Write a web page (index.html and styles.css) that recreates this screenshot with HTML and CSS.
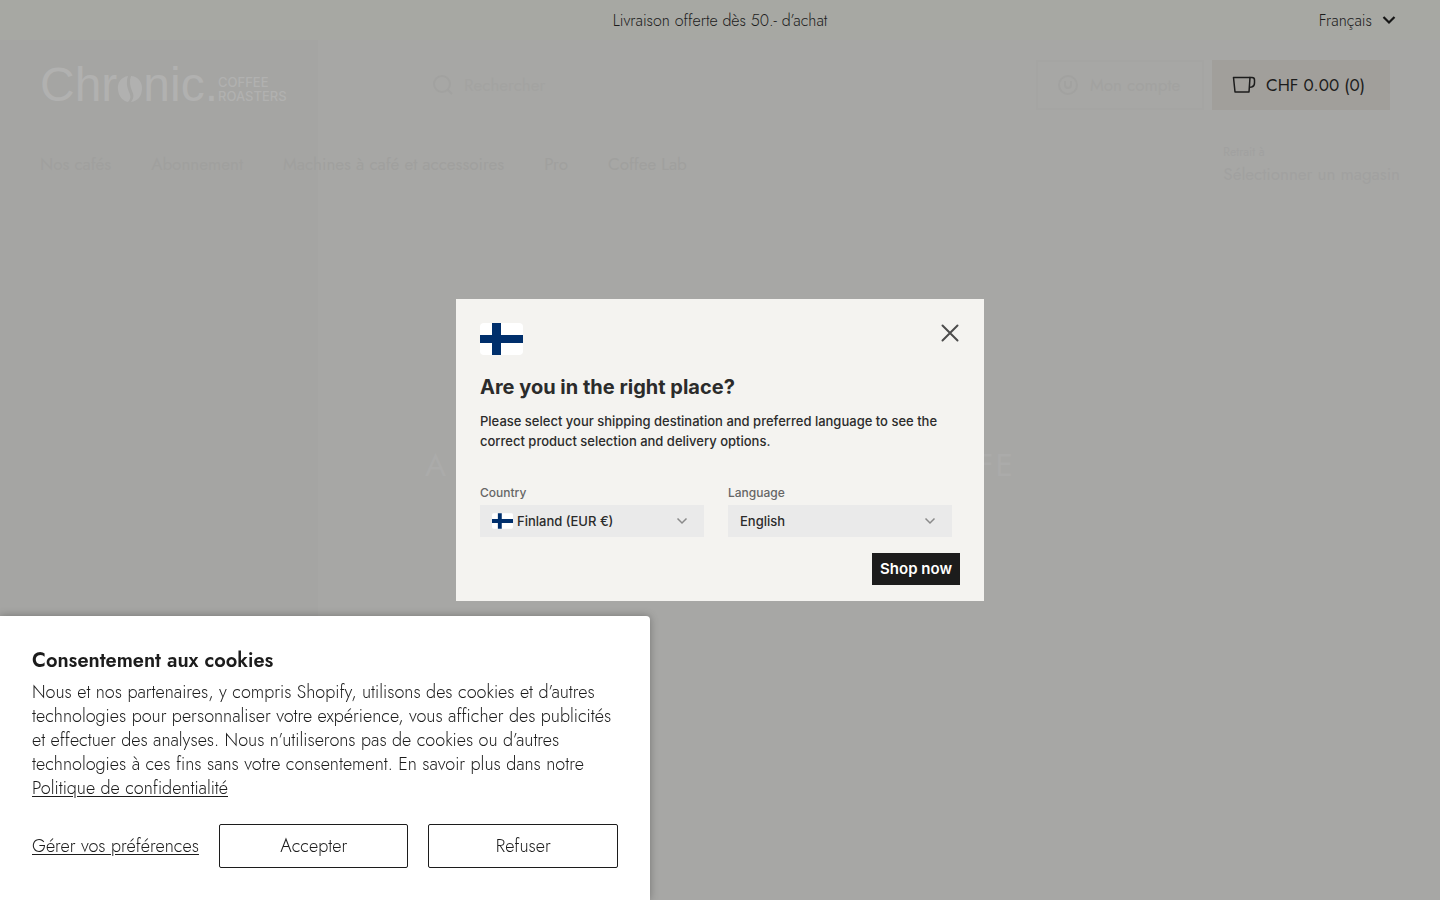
FILE: index.html
```html
<!DOCTYPE html>
<html lang="fr">
<head>
    <meta charset="UTF-8">
    <meta name="viewport" content="width=device-width, initial-scale=1.0">
    <title>Chronic. Coffee Roasters</title>
    <link rel="stylesheet" href="styles.css">
</head>
<body>
    <div class="topbar">
        <span class="topbar-message">Livraison offerte dès 50.- d’achat</span>
        <button class="lang-button" type="button">
            Français
            <svg width="14" height="10" viewBox="0 0 14 10"><path d="M1.500 2L7 7.500 12.500 2" fill="none" stroke="#161616" stroke-width="2.200"/></svg>
        </button>
    </div>

    <div class="page">
        <header class="header">
            <a class="logo" href="#" aria-label="Chronic. Coffee Roasters">
                <span class="logo-name">Chr</span>
                <svg class="bean" width="26" height="28" viewBox="0 0 26 28">
                    <path d="M11 1C4 2 0 8 1 15c1 7 5 11 10 12 3-3 3-6 1-10-2-5-3-10-1-16z"/>
                    <path d="M14 1c6 0 11 5 11 12 0 8-4 13-11 14 3-4 3-7 1-11-2-5-3-10-1-15z"/>
                </svg>
                <span class="logo-name">nic.</span>
                <span class="logo-sub">COFFEE<br>ROASTERS</span>
            </a>
            <form class="search">
                <svg width="22" height="22" viewBox="0 0 22 22" fill="none" stroke="currentColor" stroke-width="2"><circle cx="10" cy="10" r="8"/><path d="M16 16l4 4"/></svg>
                <input type="search" placeholder="Rechercher" aria-label="Rechercher">
            </form>
            <a class="account" href="#">
                <svg width="20" height="20" viewBox="0 0 20 20" fill="none" stroke="currentColor" stroke-width="2"><circle cx="10" cy="10" r="9"/><path d="M7 6v4a3 3 0 0 0 6 0V6"/></svg>
                Mon compte
            </a>
            <a class="cart" href="#">
                <svg width="24" height="18" viewBox="0 0 24 18" fill="none" stroke="#1c1c1c" stroke-width="1.500" stroke-linejoin="round"><path d="M1.500 1.500h16.500l-1 14.500H3z"/><path d="M17.500 1.500h2.500q2.500 0 2.500 2.500v3q0 3.500-3 4l-2.300.3"/></svg>
                CHF 0.00 (0)
            </a>
        </header>
        <div class="subheader">
            <nav class="nav">
                <a href="#">Nos cafés</a>
                <a href="#">Abonnement</a>
                <a href="#">Machines à café et accessoires</a>
                <a href="#">Pro</a>
                <a href="#">Coffee Lab</a>
            </nav>
            <a class="store" href="#"><small>Retrait à</small>Sélectionner un magasin</a>
        </div>
        <h1 class="hero-title"><span>A</span><span>FE</span></h1>
    </div>

    <section class="cookies" aria-labelledby="cookiesTitle">
        <h2 id="cookiesTitle">Consentement aux cookies</h2>
        <p>Nous et nos partenaires, y compris Shopify, utilisons des cookies et d’autres technologies pour personnaliser votre expérience, vous afficher des publicités et effectuer des analyses. Nous n’utiliserons pas de cookies ou d’autres technologies à ces fins sans votre consentement. En savoir plus dans notre <a href="#">Politique de confidentialité</a></p>
        <div class="cookies-actions">
            <button class="link-button" type="button">Gérer vos préférences</button>
            <button class="box-button" type="button">Accepter</button>
            <button class="box-button" type="button">Refuser</button>
        </div>
    </section>

    <div class="modal-wrap">
        <div class="modal" role="dialog" aria-labelledby="modalTitle" lang="en">
            <div class="modal-top">
                <svg class="flag" width="43" height="32" viewBox="0 0 43 32"><rect width="43" height="32" fill="#fff"/><path d="M12 0h9v32h-9zM0 12h43v8H0z" fill="#002f6c"/></svg>
                <button class="close" type="button" aria-label="Close">
                    <svg width="20" height="20" viewBox="0 0 20 20"><path d="M2.500 2.500l15 15M17.500 2.500l-15 15" stroke="#4c4c4c" stroke-width="2" stroke-linecap="round"/></svg>
                </button>
            </div>
            <h2 id="modalTitle">Are you in the right place?</h2>
            <p>Please select your shipping destination and preferred language to see the correct product selection and delivery options.</p>
            <form>
                <div class="fields">
                    <div class="field">
                        <label for="country">Country</label>
                        <div class="select-box">
                            <svg class="flag" width="21" height="16" viewBox="0 0 43 32"><rect width="43" height="32" fill="#fff"/><path d="M12 0h8v32h-8zM0 12h43v8H0z" fill="#002f6c"/></svg>
                            <select id="country"><option>Finland (EUR €)</option></select>
                            <svg width="12" height="8" viewBox="0 0 12 8"><path d="M1.500 1.500L6 6l4.500-4.500" fill="none" stroke="#8a8a8a" stroke-width="1.500"/></svg>
                        </div>
                    </div>
                    <div class="field">
                        <label for="language">Language</label>
                        <div class="select-box">
                            <select id="language"><option>English</option></select>
                            <svg width="12" height="8" viewBox="0 0 12 8"><path d="M1.500 1.500L6 6l4.500-4.500" fill="none" stroke="#8a8a8a" stroke-width="1.500"/></svg>
                        </div>
                    </div>
                </div>
                <button class="shop" type="button">Shop now</button>
            </form>
        </div>
    </div>
</body>
</html>
```
FILE: styles.css
```css
* {
    box-sizing: border-box;
}
body {
    margin: 0;
    min-height: 100vh;
    display: flex;
    flex-direction: column;
    background-color: #a7a7a5;
    color: #1c1c1c;
    font-family: Jost, Lato, sans-serif;
    font-weight: 300;
    overflow: hidden;
}
a {
    color: inherit;
    text-decoration: none;
}
button {
    font: inherit;
    color: inherit;
    background: none;
    border: 0;
    padding: 0;
    cursor: pointer;
}
svg {
    flex: none;
}

/* announcement bar */
.topbar {
    display: grid;
    grid-template-columns: 1fr auto 1fr;
    align-items: center;
    height: 40px;
    padding: 0 44px;
    background-color: #a7a8a3;
    font-size: 16px;
}
.topbar-message {
    grid-column: 2;
}
.lang-button {
    justify-self: end;
    display: flex;
    align-items: center;
    gap: 10px;
}

/* shop page, faded behind the dialog */
.page {
    flex: 1;
    background: linear-gradient(to right, #a5a5a3 318px, transparent 318px);
    color: #a0a09e;
    font-size: 17px;
    font-weight: 400;
}
.header {
    display: flex;
    align-items: center;
    height: 90px;
    padding: 0 50px 0 40px;
}
.logo {
    display: flex;
    align-items: center;
    width: 392px;
    color: #b1b1b0;
    fill: #b1b1b0;
    font-family: "Liberation Sans", Arial, sans-serif;
}
.logo-name {
    font-size: 48px;
    line-height: 48px;
}
.logo-sub {
    font-family: Inter, sans-serif;
    margin: 8px 0 0;
    font-size: 13px;
    line-height: 14px;
    font-weight: 500;
}
.bean {
    margin-top: 8px;
}
.search {
    flex: 1;
    display: flex;
    align-items: center;
    gap: 8px;
}
.search svg, .account {
    color: #a2a2a0;
}
.search input {
    flex: 1;
    border: 0;
    background: none;
    font: inherit;
    color: inherit;
    outline: 0;
}
.search input::placeholder {
    color: #a3a3a1;
}
.account, .cart {
    display: flex;
    align-items: center;
    gap: 12px;
    height: 50px;
    padding: 0 20px;
}
.account {
    width: 168px;
    margin-right: 8px;
    border: 2px solid #a5a5a3;
}
.cart {
    width: 178px;
    gap: 10px;
    background-color: #a19f9b;
    color: #1c1c1c;
}
.subheader {
    display: flex;
    justify-content: space-between;
    padding: 12px 40px 0;
}
.nav {
    display: flex;
    gap: 40px;
    padding-top: 10px;
}
.store {
    color: #a1a1a0;
    font-size: 17px;
}
.store small {
    display: block;
    font-size: 12px;
    line-height: 20px;
}
.hero-title {
    display: flex;
    justify-content: space-between;
    max-width: 590px;
    margin: 256px auto 0;
    font-size: 32px;
    font-weight: 400;
    letter-spacing: 2px;
    color: #ababaa;
}

/* cookie banner */
.cookies {
    position: fixed;
    left: 0;
    bottom: 0;
    width: 650px;
    max-width: 100%;
    padding: 32px;
    background-color: #fff;
    border-radius: 0 4px 0 0;
    box-shadow: 0 0 8px rgba(0, 0, 0, 0.3);
    font-size: 18px;
    line-height: 24px;
}
.cookies h2 {
    margin: 0 0 6px;
    font-size: 20px;
    line-height: 26px;
    font-weight: 600;
}
.cookies p {
    margin: 0 0 24px;
}
.cookies p a, .link-button {
    text-decoration: underline;
    text-underline-offset: 2px;
}
.cookies-actions {
    display: flex;
    gap: 20px;
}
.box-button {
    flex: 1;
    height: 44px;
    border: 1px solid #1c1c1c;
    border-radius: 2px;
}

/* country dialog */
.modal-wrap {
    position: fixed;
    inset: 0;
    display: flex;
    align-items: center;
    justify-content: center;
    pointer-events: none;
}
.modal {
    width: 528px;
    padding: 24px 24px 16px;
    background-color: #f4f3f0;
    color: #2b2b2b;
    font-family: Inter, sans-serif;
    font-weight: 500;
    pointer-events: auto;
}
.modal-top {
    display: flex;
    justify-content: space-between;
    align-items: flex-start;
}
.flag {
    border-radius: 4px;
}
.close {
    display: flex;
}
.modal h2 {
    margin: 20px 0 12px;
    font-size: 20px;
    line-height: 24px;
    font-weight: 700;
}
.modal p {
    margin: 0 0 32px;
    font-size: 13px;
    line-height: 20px;
}
.fields {
    display: grid;
    grid-template-columns: 1fr 1fr;
    gap: 24px;
    padding-right: 8px;
}
.field label {
    display: block;
    margin-bottom: 2px;
    font-size: 12px;
    line-height: 20px;
    color: #666;
}
.select-box {
    display: flex;
    align-items: center;
    height: 32px;
    padding: 0 16px 0 12px;
    background-color: #eaeaea;
}
.select-box .flag {
    margin-right: 4px;
    border-radius: 2px;
}
.select-box select {
    flex: 1;
    appearance: none;
    border: 0;
    padding: 0;
    background: none;
    font: inherit;
    font-size: 13px;
    color: inherit;
}
.shop {
    display: block;
    height: 32px;
    margin: 16px 0 0 auto;
    padding: 0 8px;
    background-color: #1c1c1c;
    color: #fff;
    font-size: 15px;
    line-height: 30px;
    font-weight: 600;
}
```
